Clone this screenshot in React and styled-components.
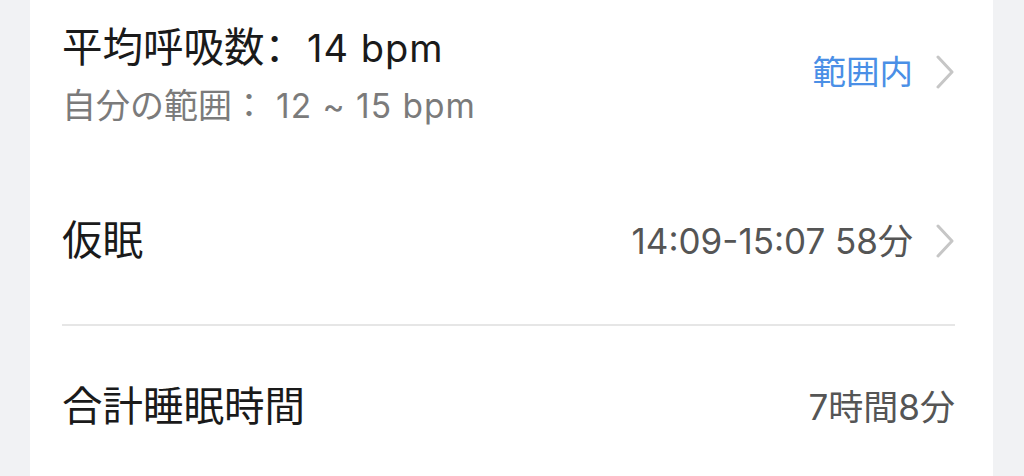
import React from "react";
import styled, { createGlobalStyle } from "styled-components";

const Global = createGlobalStyle`
  html, body { margin: 0; padding: 0; background: #f1f2f4; }
  body { font-family: "Inter", "Noto Sans CJK JP", "Noto Sans", sans-serif; }
`;

const Page = styled.div`
  height: 476px;
  overflow: hidden;
  padding: 0 31px 0 30px;
  background: #f1f2f4;
`;

const Card = styled.div`
  background: #ffffff;
  height: 476px;
  padding: 0 38px 0 32px;
  box-sizing: border-box;
  display: flex;
  flex-direction: column;
`;

const Row = styled.div`
  display: flex;
  align-items: center;
  justify-content: space-between;
  padding-top: ${(p) => p.$pt}px;
`;

const Stack = styled.div`
  display: flex;
  flex-direction: column;
  gap: 15px;
`;

const Title = styled.div`
  font-size: 40.5px;
  line-height: 44px;
  font-weight: 400;
  color: #1a1a1a;
  white-space: nowrap;
`;

const Sub = styled.div`
  font-size: 34px;
  line-height: 42px;
  color: #7b7b7b;
  white-space: nowrap;
`;

const Colon = styled.span`
  font-family: "Noto Sans CJK SC", "Noto Sans CJK JP", sans-serif;
`;

const Num = styled.span`
  font-size: ${(p) => p.$size}px;
  margin-left: ${(p) => p.$ml || 0}px;
  letter-spacing: ${(p) => p.$ls || 0}px;
`;

const Right = styled.div`
  display: flex;
  align-items: center;
  gap: 22px;
  margin-top: ${(p) => p.$mt || 0}px;
`;

const Value = styled.span`
  font-size: ${(p) => (p.$blue ? 33.5 : 35)}px;
  line-height: 44px;
  color: ${(p) => (p.$blue ? "#4a8fe6" : "#555555")};
  white-space: nowrap;
`;

const Divider = styled.div`
  height: 2px;
  background: #e6e6e6;
  margin-top: 61px;
`;

const Chevron = () => (
  <svg width="20" height="34" viewBox="0 0 20 34" fill="none">
    <path d="M3 2 L17 17 L3 32" stroke="#c6c6c6" strokeWidth="3" strokeLinecap="round" strokeLinejoin="round" />
  </svg>
);

export default function App() {
  return (
    <>
      <Global />
      <Page>
        <Card>
          <Row $pt={23}>
            <Stack>
              <Title>
                平均呼吸数<Colon>：</Colon>
                <Num $size={38} $ml={2} $ls={1}>14 bpm</Num>
              </Title>
              <Sub>
                自分の範囲：<Num $size={33.5} $ml={10} $ls={1}>12 ~ 15 bpm</Num>
              </Sub>
            </Stack>
            <Right $mt={-6}>
              <Value $blue>範囲内</Value>
              <Chevron />
            </Right>
          </Row>
          <Row $pt={92}>
            <Title>仮眠</Title>
            <Right>
              <Value>14:09-15:07 58分</Value>
              <Chevron />
            </Right>
          </Row>
          <Divider />
          <Row $pt={59}>
            <Title>合計睡眠時間</Title>
            <Right>
              <Value>7時間8分</Value>
            </Right>
          </Row>
        </Card>
      </Page>
    </>
  );
}
